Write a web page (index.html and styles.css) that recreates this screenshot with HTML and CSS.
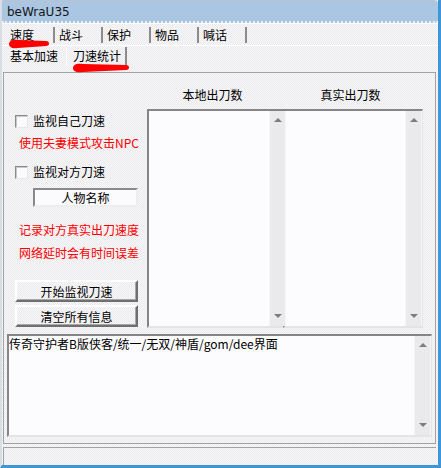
FILE: index.html
```html
<!DOCTYPE html>
<html lang="zh">
<head>
  <meta charset="UTF-8">
  <title>beWraU35</title>
  <link rel="stylesheet" href="styles.css">
</head>
<body>
  <div class="window">
    <div class="titlebar"><span class="title">beWraU35</span></div>

    <div class="tabs tabs-main">
      <div class="tab tab-first">速度</div>
      <div class="tab">战斗</div>
      <div class="tab">保护</div>
      <div class="tab">物品</div>
      <div class="tab">喊话</div>
    </div>

    <div class="tabs tabs-sub">
      <div class="tab tab-plain">基本加速</div>
      <div class="tab tab-active">刀速统计</div>
    </div>

    <div class="page">
      <div class="upper">
        <div class="side">
          <label class="check check-self"><span class="box"></span>监视自己刀速</label>
          <p class="note note-npc">使用夫妻模式攻击NPC</p>
          <label class="check check-other"><span class="box"></span>监视对方刀速</label>
          <div class="name-box">人物名称</div>
          <p class="note note-real">记录对方真实出刀速度</p>
          <p class="note note-delay">网络延时会有时间误差</p>
          <button class="btn btn-start">开始监视刀速</button>
          <button class="btn btn-clear">清空所有信息</button>
        </div>

        <div class="list-col">
          <div class="list-title">本地出刀数</div>
          <div class="listbox">
            <div class="scroll"><span class="arrow up"></span><span class="arrow down"></span></div>
          </div>
        </div>

        <div class="list-col">
          <div class="list-title">真实出刀数</div>
          <div class="listbox">
            <div class="scroll"><span class="arrow up"></span><span class="arrow down"></span></div>
          </div>
        </div>
      </div>

      <div class="memo">
        <div class="memo-text">传奇守护者B版侠客/统一/无双/神盾/gom/dee界面</div>
        <div class="scroll"><span class="arrow up"></span><span class="arrow down"></span></div>
      </div>
    </div>

    <div class="statusbar"></div>

    <!-- red marker strokes drawn over the tabs -->
    <svg class="mark mark-speed" width="44" height="12" viewBox="0 0 44 12">
      <path d="M2,6 C2,2 7,1 11,2 L39,3 C43,3 43,8 39,8 L11,10 C5,11 2,9 2,6Z" fill="#ff0000"/>
    </svg>
    <svg class="mark mark-stats" width="60" height="12" viewBox="0 0 60 12">
      <path d="M2,6 C2,2 7,1 12,2 L55,3 C59,3 59,8 55,8 L12,10 C5,11 2,9 2,6Z" fill="#ff0000"/>
    </svg>
  </div>
</body>
</html>
```

FILE: styles.css
```css
* {
  box-sizing: border-box;
}
body {
  margin: 0;
  font-family: "Noto Sans CJK SC", "DejaVu Sans", sans-serif;
  font-size: 12px;
  color: #000;
  background: #ffffff;
}
.window {
  position: relative;
  width: 441px;
  height: 468px;
  display: flex;
  flex-direction: column;
  border-left: 2px solid #d9dee5;
  border-right: 3px solid #3d97d6;
  border-bottom: 3px solid #3d97d6;
  background: repeating-conic-gradient(#f8f7f9 0 25%, #eae9ec 0 50%) 0 0 / 2px 2px;
}

/* title bar */
.titlebar {
  height: 23px;
  flex: none;
  padding-left: 5px;
  background: #aac6e2;
  border-top: 2px dotted #b9c4cf;
  border-bottom: 2px dotted #e6eef6;
  border-top-right-radius: 4px;
  display: flex;
  align-items: center;
}
.title {
  font-family: "DejaVu Sans", sans-serif;
  font-size: 12px;
  color: #151515;
}

/* tabs */
.tabs {
  display: flex;
  flex: none;
  padding-left: 1px;
}
.tabs-main {
  height: 22px;
  border-top: 1px solid #ffffff;
}
.tabs-sub {
  height: 21px;
  border-top: 1px solid #ffffff;
}
.tab {
  height: 16px;
  line-height: 16px;
  width: 48px;
  padding-left: 4px;
  border-right: 2px solid #8c8c8c;
  white-space: nowrap;
}
.tabs-main .tab {
  margin-top: 3px;
}
.tabs-main .tab-first {
  width: 52px;
  padding-left: 7px;
}
.tabs-sub .tab {
  margin-top: 1px;
  height: 18px;
  line-height: 18px;
}
.tab-plain {
  width: 63px !important;
  padding-left: 7px !important;
  border-right: none;
}
.tab-active {
  width: 61px !important;
  padding-left: 6px !important;
  border-left: 1px solid #ffffff;
}

/* tab page */
.page {
  height: 372px;
  flex: none;
  margin: 6px 2px 0 1px;
  border: 1px solid #a3a3a3;
  display: flex;
  flex-direction: column;
}
.upper {
  display: grid;
  grid-template-columns: 123px 140px 140px;
  column-gap: 0;
  padding-left: 11px;
  height: 255px;
  flex: none;
}
.side {
  display: flex;
  flex-direction: column;
  align-items: flex-start;
}
.check {
  display: flex;
  align-items: center;
  height: 14px;
  line-height: 14px;
}
.check-self {
  margin-top: 41px;
}
.check-other {
  margin-top: 15px;
}
.box {
  width: 13px;
  height: 13px;
  margin-right: 5px;
  background: #fbfafc;
  border: 1px solid;
  border-color: #8a8a8a #e8e8e8 #e8e8e8 #8a8a8a;
  box-shadow: inset 1px 1px 0 #c8c8c8;
}
.note {
  margin: 0;
  margin-left: 4px;
  height: 14px;
  line-height: 14px;
  color: #ff0000;
  white-space: nowrap;
}
.note-npc {
  margin-top: 8px;
}
.note-real {
  margin-top: 16px;
}
.note-delay {
  margin-top: 9px;
}
.name-box {
  margin-top: 9px;
  margin-left: 18px;
  width: 105px;
  height: 19px;
  line-height: 15px;
  text-align: center;
  background: #fbfafc;
  border: 2px solid;
  border-color: #8a8a8a #eeeeee #eeeeee #8a8a8a;
}
.btn {
  width: 123px;
  height: 22px;
  padding: 0;
  font-family: inherit;
  font-size: 12px;
  color: #000;
  background: transparent;
  border: 2px solid;
  border-color: #ffffff #6f6f6f #6f6f6f #ffffff;
  box-shadow: inset -1px -1px 0 #a8a8a8;
}
.btn-start {
  margin-top: 20px;
}
.btn-clear {
  margin-top: 3px;
}

/* list boxes */
.list-col {
  display: flex;
  flex-direction: column;
  margin-left: 9px;
}
.list-col + .list-col {
  margin-left: 5px;
}
.list-title {
  margin-top: 15px;
  height: 14px;
  line-height: 14px;
  text-align: center;
}
.listbox {
  margin-top: 7px;
  height: 219px;
  width: 140px;
  display: flex;
  justify-content: flex-end;
  background: #fcfbfe;
  border: 2px solid;
  border-color: #858585 #e4e4e4 #e4e4e4 #858585;
  border-right-width: 1px;
}
.scroll {
  position: relative;
  width: 17px;
  background: #eae9ec;
  border-left: 1px solid #f5f4f6;
  border-right: 1px solid #f5f4f6;
}
.arrow {
  position: absolute;
  left: 4px;
  width: 0;
  height: 0;
  border-left: 4px solid transparent;
  border-right: 4px solid transparent;
}
.arrow.up {
  top: 7px;
  border-bottom: 4px solid #7d7d7d;
}
.arrow.down {
  bottom: 8px;
  border-top: 4px solid #7d7d7d;
}

/* memo */
.memo {
  margin: 6px 0 0 3px;
  width: 425px;
  height: 103px;
  display: flex;
  background: #fcfbfe;
  border: 2px solid;
  border-color: #858585 #e4e4e4 #e4e4e4 #858585;
  border-right-width: 1px;
}
.memo-text {
  flex: 1;
  padding: 1px 0 0 0;
  line-height: 14px;
  white-space: nowrap;
}

/* status bar */
.statusbar {
  flex: 1;
  margin: 3px 2px 0 1px;
  border-top: 1px solid #a3a3a3;
  border-left: 1px solid #a3a3a3;
}

/* red marks */
.mark {
  position: absolute;
}
.mark-speed {
  left: 5px;
  top: 38px;
}
.mark-stats {
  left: 69px;
  top: 62px;
}
```
